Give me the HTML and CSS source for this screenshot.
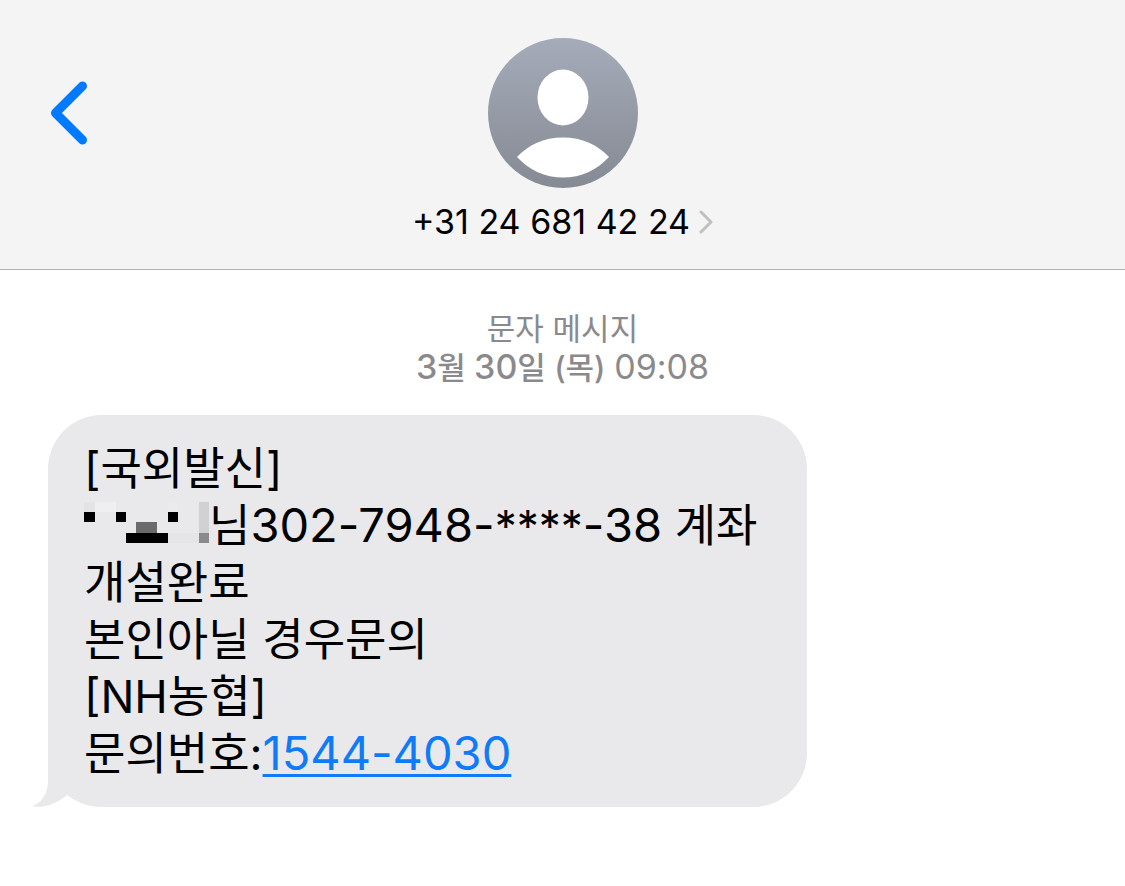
FILE: index.html
```html
<!DOCTYPE html>
<html lang="ko">
<head>
  <meta charset="UTF-8">
  <meta name="viewport" content="width=device-width, initial-scale=1">
  <title>문자 메시지</title>
  <link rel="stylesheet" href="styles.css">
</head>

<body>

  <header class="chat-header">

    <button class="back-btn" type="button" aria-label="뒤로">
      <svg width="38" height="64" viewBox="0 0 38 64" aria-hidden="true">
        <path d="M32.500 5 L5.500 32 L32.500 59" fill="none" stroke="#007aff" stroke-width="9" stroke-linecap="round" stroke-linejoin="round"/>
      </svg>
    </button>

    <a class="contact" href="#">
      <svg class="avatar" width="150" height="150" viewBox="0 0 150 150" aria-hidden="true">
        <defs>
          <linearGradient id="avatarFill" x1="0" y1="0" x2="0" y2="1">
            <stop offset="0" stop-color="#a5abb9"/>
            <stop offset="1" stop-color="#858a93"/>
          </linearGradient>
        </defs>
        <circle cx="75" cy="75" r="75" fill="url(#avatarFill)"/>
        <ellipse cx="75" cy="59.500" rx="25.500" ry="28" fill="#fff"/>
        <path d="M29 119 C40 107 56 99.500 75 99.500 C94 99.500 110 107 121 119 C109 132 93 139.500 75 139.500 C57 139.500 41 132 29 119 Z" fill="#fff"/>
      </svg>
      <span class="phone">
        +31 24 681 42 24
        <svg width="14" height="24" viewBox="0 0 14 24" aria-hidden="true">
          <path d="M2 2 L12 12 L2 22" fill="none" stroke="#c0c0c2" stroke-width="3" stroke-linecap="round" stroke-linejoin="round"/>
        </svg>
      </span>
    </a>

  </header>

  <main class="messages">

    <div class="timestamp">
      <p>문자 메시지</p>
      <p class="date"><strong><span class="digits">3</span>월 <span class="digits">30</span>일 (목)</strong> <span class="digits">09:08</span></p>
    </div>

    <div class="bubble">
      <p>[국외발신]</p>
      <p><svg class="mosaic" width="125" height="42" viewBox="0 0 125 42" shape-rendering="crispEdges" aria-hidden="true">
          <rect x="0" y="0" width="11" height="10" fill="#e4e4e6"/>
          <rect x="11" y="0" width="21" height="10" fill="#efeff1"/>
          <rect x="84" y="0" width="10" height="10" fill="#ebebed"/>
          <rect x="0" y="10" width="11" height="10" fill="#000"/>
          <rect x="32" y="10" width="10" height="10" fill="#000"/>
          <rect x="84" y="10" width="10" height="10" fill="#000"/>
          <rect x="52" y="20" width="21" height="11" fill="#6a6a6b"/>
          <rect x="42" y="31" width="42" height="10" fill="#000"/>
          <rect x="84" y="31" width="31" height="10" fill="#e5e5e7"/>
          <rect x="115" y="0" width="10" height="31" fill="#d1d1d3"/>
          <rect x="115" y="31" width="10" height="10" fill="#8a8a8b"/>
        </svg>님<span class="num">302-7948-<span class="mask">****</span>-38</span> 계좌</p>
      <p>개설완료</p>
      <p>본인아닐 경우문의</p>
      <p>[NH농협]</p>
      <p>문의번호:<a class="num" href="tel:1544-4030">1544-4030</a></p>

      <svg class="tail" width="80" height="70" viewBox="0 0 80 70" aria-hidden="true">
        <path d="M16 0 V44 C16 56 10 66 0 69 C12 72 26 66 35 58 C46 66 58 70 72 70 H80 V0 Z" fill="#e9e9eb"/>
      </svg>
    </div>

  </main>

</body>
</html>
```

FILE: styles.css
```css
* {
  box-sizing: border-box;
}

body {
  margin: 0;
  background: #fff;
  color: #000;
  font-family: Inter, "Noto Sans CJK KR", sans-serif;
}

p {
  margin: 0;
}

.chat-header {
  display: grid;
  grid-template-columns: 1fr auto 1fr;
  align-items: start;
  padding: 38px 48px 27px;
  background: #f4f4f4;
  border-bottom: 1px solid #b2b2b2;
}

.back-btn {
  display: flex;
  align-items: center;
  justify-self: start;
  height: 150px;
  padding: 0 2px;
  border: none;
  background: none;
  cursor: pointer;
}

.contact {
  display: flex;
  flex-direction: column;
  align-items: center;
  gap: 14px;
  color: #000;
  text-decoration: none;
}

.phone {
  display: flex;
  align-items: center;
  gap: 9px;
  font-size: 34px;
  line-height: 40px;
}

.messages {
  padding: 39px 24px 48px 48px;
}

.timestamp {
  margin: 0 24px 28px 0;
  color: #8a8a8c;
  font-size: 31px;
  line-height: 39px;
  text-align: center;
}

.date strong {
  font-weight: 500;
}

.digits {
  font-size: 34px;
  line-height: 1;
}

.bubble {
  position: relative;
  max-width: 759px;
  padding: 25px 36px;
  border-radius: 54px;
  background: #e9e9eb;
  font-size: 45px;
  line-height: 57px;
}

.num {
  font-size: 47px;
  line-height: 1;
}

.mask {
  font-size: 44px;
}

.bubble a {
  color: #107bf8;
  text-decoration-thickness: 3px;
  text-underline-offset: 4px;
}

.mosaic {
  vertical-align: -2px;
}

.tail {
  position: absolute;
  left: -16px;
  bottom: 0;
  z-index: -1;
}
```
